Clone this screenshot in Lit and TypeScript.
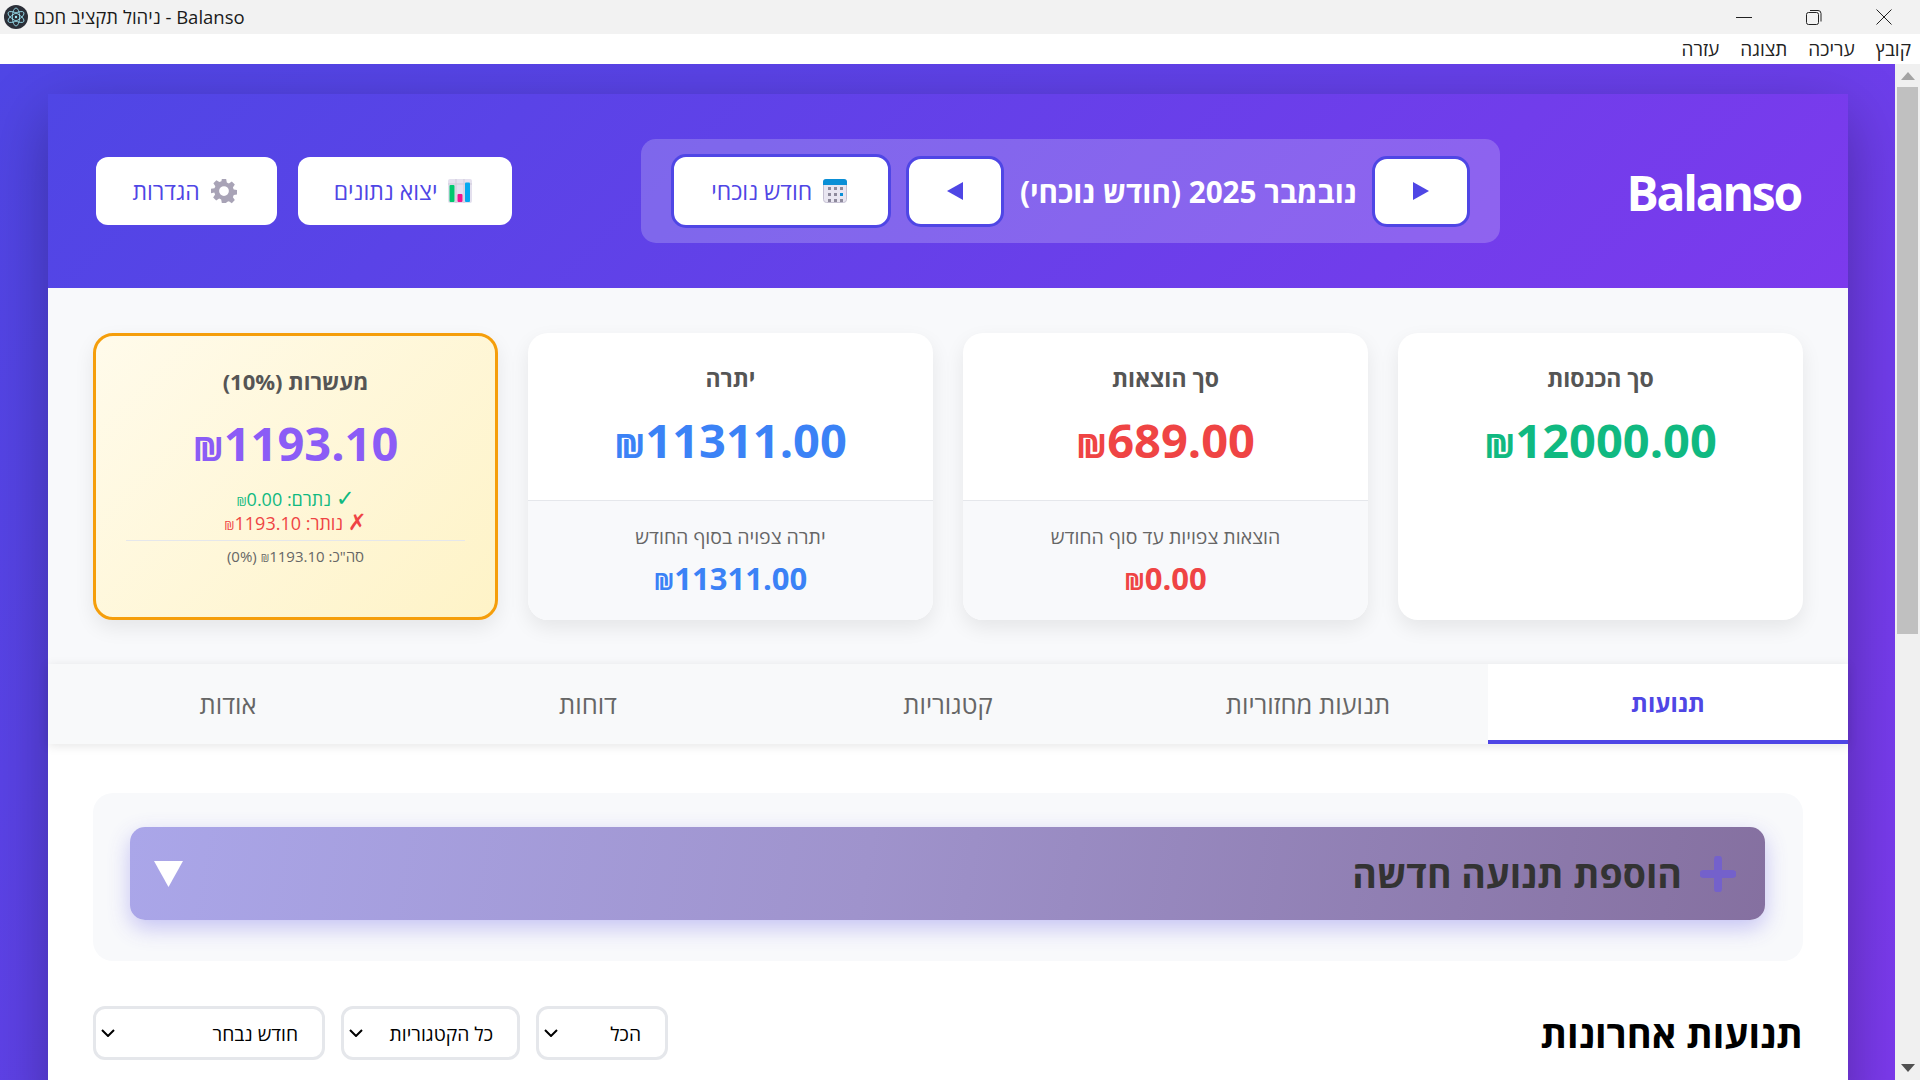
import { LitElement, html, css, svg } from 'lit';
import { customElement } from 'lit/decorators.js';

const gearIcon = html`<svg class="ico" viewBox="0 0 24 24" width="26" height="26">
  <path fill="#a8a3b6" fill-rule="evenodd" d="M10 1h4l.6 3.2 1.9.8 2.7-1.8 2.8 2.8-1.8 2.7.8 1.9 3.2.6v4l-3.2.6-.8 1.9 1.8 2.7-2.8 2.8-2.7-1.8-1.9.8L14 23h-4l-.6-3.2-1.9-.8-2.7 1.8-2.8-2.8 1.8-2.7-.8-1.9L0 14v-4l3.2-.6.8-1.9-1.8-2.7 2.8-2.8 2.7 1.8 1.9-.8zM12 7.5a4.5 4.5 0 1 0 0 9 4.5 4.5 0 0 0 0-9z"/>
</svg>`;

const chartIcon = html`<svg class="ico" viewBox="0 0 24 24" width="24" height="24">
  <rect x="0" y="0" width="24" height="24" rx="2" fill="#e4e0ee"/>
  <path d="M8 0v24M16 0v24M0 5h24" stroke="#cfcad9" stroke-width="1"/>
  <rect x="1.5" y="6" width="5" height="17" rx="1" fill="#00c86e"/>
  <rect x="9.5" y="15" width="5" height="8" rx="1" fill="#f2128e"/>
  <rect x="17" y="3.5" width="5" height="19.5" rx="1" fill="#03a9f0"/>
</svg>`;

const calendarIcon = html`<svg class="ico" viewBox="0 0 24 24" width="24" height="24">
  <rect x=".5" y=".5" width="23" height="23" rx="3" fill="#e9e6f1" stroke="#c5c0d2"/>
  <path d="M0 6V3a3 3 0 0 1 3-3h18a3 3 0 0 1 3 3v3z" fill="#0a8fd6"/>
  ${[5, 11, 17].map((y) =>
    [5, 11, 17].map(
      (x) => svg`<rect x=${x} y=${y + 3} width="3" height="3" fill=${x === 17 && y === 11 ? '#0a8fd6' : '#8e8a9c'}/>`
    )
  )}
</svg>`;

const electronIcon = html`<svg class="logo" viewBox="0 0 24 24" width="24" height="24">
  <circle cx="12" cy="12" r="12" fill="#2b2f38"/>
  <g fill="none" stroke="#9feaf9" stroke-width=".8">
    <ellipse cx="12" cy="12" rx="9" ry="3.6" transform="rotate(30 12 12)"/>
    <ellipse cx="12" cy="12" rx="9" ry="3.6" transform="rotate(90 12 12)"/>
    <ellipse cx="12" cy="12" rx="9" ry="3.6" transform="rotate(150 12 12)"/>
  </g>
  <circle cx="12" cy="12" r="1.2" fill="#9feaf9"/>
</svg>`;

const money = (v: string) => html`<span class="sym">₪</span>${v}`;

const summary = [
  { title: 'סך הכנסות', value: '12000.00', cls: 'green' },
  { title: 'סך הוצאות', value: '689.00', cls: 'red', foot: 'הוצאות צפויות עד סוף החודש', footValue: '0.00' },
  { title: 'יתרה', value: '11311.00', cls: 'blue', foot: 'יתרה צפויה בסוף החודש', footValue: '11311.00' },
];

const tabs = ['תנועות', 'תנועות מחזוריות', 'קטגוריות', 'דוחות', 'אודות'];
const menu = ['קובץ', 'עריכה', 'תצוגה', 'עזרה'];

@customElement('app-root')
export class AppRoot extends LitElement {
  static styles = css`
    :host {
      display: block;
      width: 1920px;
      height: 1080px;
      overflow: hidden;
      font-family: "Open Sans", "Noto Sans", "Liberation Sans", sans-serif;
      background: #fff;
    }
    * { box-sizing: border-box; }

    .titlebar {
      height: 34px;
      background: #f2f2f2;
      display: flex;
      align-items: center;
      padding-left: 2px;
      color: #1a1a1a;
      font-size: 18.5px;
    }
    .logo { margin-left: 2px; margin-right: 6px; }
    .title { flex: 1; padding-bottom: 2px; }
    .winbtns { display: flex; padding-right: 1px; }
    .winbtn { width: 70px; height: 34px; display: flex; align-items: center; justify-content: center; }
    .winbtn svg { display: block; }

    .menubar {
      height: 30px;
      direction: rtl;
      display: flex;
      gap: 21px;
      align-items: center;
      padding: 0 9px;
      background: #fff;
      font-size: 19px;
      color: #222;
    }

    .viewport { display: flex; height: 1016px; }
    .page {
      width: 1895px;
      height: 1016px;
      overflow: hidden;
      padding: 30px 47px 0 48px;
      background: linear-gradient(135deg, #4f46e5 0%, #7c3aed 100%);
      direction: rtl;
    }
    .scrollbar {
      width: 25px;
      background: #f0f0f0;
      display: flex;
      flex-direction: column;
      align-items: center;
      padding-top: 8px;
    }
    .thumb { width: 21px; height: 547px; background: #c0c0c0; margin-top: 7px; }
    .arrow-down { margin-top: auto; margin-bottom: 8px; }

    .container {
      width: 1800px;
      background: #fff;
      box-shadow: 0 20px 60px rgba(0, 0, 0, 0.3);
    }

    .header {
      height: 194px;
      display: flex;
      align-items: center;
      justify-content: space-between;
      padding: 0 45px;
      color: #fff;
      background: linear-gradient(135deg, #4f46e5 0%, #7c3aed 100%);
    }
    .brand { font-size: 48px; font-weight: 700; line-height: 1; letter-spacing: -2.2px; direction: ltr; padding: 4px 2px 0 0; }

    .nav {
      display: flex;
      align-items: center;
      gap: 15px;
      height: 104px;
      padding: 0 30px;
      border-radius: 15px;
      background: rgba(255, 255, 255, 0.2);
    }
    .nav-label { width: 338px; text-align: center; font-size: 29.7px; font-weight: 700; white-space: nowrap; }
    .btn {
      display: flex;
      align-items: center;
      justify-content: center;
      gap: 11px;
      height: 74px;
      border: 3px solid transparent;
      background-clip: padding-box;
      background-color: #fff;
      border-radius: 15px;
      color: #4f46e5;
      font-size: 23px;
      font-weight: 500;
      white-space: nowrap;
    }
    .btn.outlined { border-color: #4f46e5; background-clip: border-box; }
    .btn.arrow { width: 98px; height: 71px; }
    .btn.today { width: 220px; padding-right: 4px; }
    .actions { display: flex; gap: 15px; }
    .btn.export { width: 220px; padding-right: 4px; }
    .btn.settings { width: 187px; padding-right: 4px; }

    .stats {
      display: grid;
      grid-template-columns: repeat(4, 405px);
      gap: 30px;
      padding: 45px 45px 44px;
      background: #f8f9fb;
    }
    .card {
      height: 287px;
      display: flex;
      flex-direction: column;
      background: #fff;
      border-radius: 20px;
      overflow: hidden;
      box-shadow: 0 8px 20px rgba(0, 0, 0, 0.08);
      text-align: center;
    }
    .card-main { height: 167px; padding-top: 28px; }
    .card-title { font-size: 23px; font-weight: 700; color: #555; line-height: 34px; }
    .card-value { font-size: 47px; font-weight: 700; line-height: 64px; margin-top: 13px; }
    .sym { font-size: 0.72em; line-height: 0; }
    .mark { font-family: "DejaVu Sans", sans-serif; font-size: 1.25em; line-height: 0; }
    .card-foot {
      flex: 1;
      border-top: 1px solid #e5e7eb;
      background: #f8f9fb;
      padding-top: 21px;
    }
    .foot-label { font-size: 19.5px; color: #666; line-height: 30px; }
    .foot-value { font-size: 31px; font-weight: 700; line-height: 40px; margin-top: 6px; }
    .green { color: #10b981; }
    .red { color: #ef4444; }
    .blue { color: #3b82f6; }
    .purple { color: #8b5cf6; }

    .card.tithe {
      border: 3px solid #f59e0b;
      background: linear-gradient(135deg, #fffbeb 0%, #fef3c7 100%);
      padding: 28px 30px 0;
    }
    .tithe .card-title { font-size: 22px; }
    .tithe .card-value { margin-top: 13px; }
    .tithe-row { font-size: 18px; line-height: 24px; }
    .tithe-rows { margin-top: 12px; padding-bottom: 5px; border-bottom: 1px solid #e5e7eb; }
    .tithe-total { font-size: 15px; color: #666; line-height: 30px; }

    .tabs {
      display: grid;
      grid-template-columns: repeat(5, 360px);
      height: 80px;
      background: #f8f9fa;
      box-shadow: 0 2px 10px rgba(0, 0, 0, 0.1);
      position: relative;
    }
    .tab {
      display: flex;
      align-items: center;
      justify-content: center;
      font-size: 25.5px;
      color: #666;
      border-bottom: 4px solid transparent;
      padding-top: 4px;
    }
    .tab.active {
      background: #fff;
      color: #4f46e5;
      font-weight: 700;
      font-size: 24px;
      border-bottom-color: #4f46e5;
      padding-top: 0;
    }

    .content { padding: 49px 45px 60px; background: #fff; }
    .add-box {
      height: 168px;
      padding: 34px 38px 41px 37px;
      border-radius: 20px;
      background: #f8f9fb;
    }
    .add-btn {
      height: 93px;
      display: flex;
      align-items: center;
      justify-content: space-between;
      padding: 0 29px 0 24px;
      border-radius: 15px;
      background: linear-gradient(100deg, #aaa6e9 0%, #9f93cc 45%, #8570a0 100%);
      box-shadow: 0 8px 22px rgba(79, 70, 229, 0.3);
      color: #333;
    }
    .add-label { display: flex; align-items: center; gap: 18px; font-size: 37.5px; font-weight: 700; }
    .list-head {
      display: flex;
      align-items: center;
      justify-content: space-between;
      margin-top: 45px;
      height: 54px;
    }
    .list-title { margin: 0; font-size: 38px; font-weight: 700; color: #000; }
    .filters { display: flex; gap: 16px; }
    select {
      appearance: none;
      height: 54px;
      border: 3px solid #e5e7eb;
      border-radius: 12px;
      background: #fff no-repeat left 5px center;
      background-image: url("data:image/svg+xml,%3Csvg xmlns='http://www.w3.org/2000/svg' width='14' height='8'%3E%3Cpath d='M1 1l6 6 6-6' fill='none' stroke='%23000' stroke-width='2'/%3E%3C/svg%3E");
      padding: 0 24px 0 24px;
      color: #000;
      font-family: inherit;
      font-size: 19.3px;
    }
    .f-type { width: 132px; }
    .f-cat { width: 179px; }
    .f-month { width: 232px; }
  `;

  render() {
    return html`
      <div class="titlebar">
        ${electronIcon}
        <span class="title">ניהול תקציב חכם - Balanso</span>
        <div class="winbtns">
          <div class="winbtn"><svg width="16" height="16"><path d="M0 8.5h16" stroke="#222"/></svg></div>
          <div class="winbtn"><svg width="16" height="16" fill="none" stroke="#222"><rect x=".5" y="3.5" width="12" height="12" rx="2"/><path d="M4 1.5h8a3 3 0 0 1 3 3v8"/></svg></div>
          <div class="winbtn"><svg width="16" height="16"><path d="M.5.5l15 15M15.5.5l-15 15" stroke="#222"/></svg></div>
        </div>
      </div>
      <div class="menubar">${menu.map((m) => html`<span>${m}</span>`)}</div>
      <div class="viewport">
        <div class="page">
          <div class="container">
            ${this.renderHeader()}
            ${this.renderStats()}
            <div class="tabs">
              ${tabs.map((t, i) => html`<div class="tab ${i === 0 ? 'active' : ''}">${t}</div>`)}
            </div>
            <div class="content">
              <div class="add-box">
                <div class="add-btn">
                  <span class="add-label">
                    <svg width="36" height="36" viewBox="0 0 36 36"><path d="M18 3.5v29M3.5 18h29" stroke="#7461cb" stroke-width="8" stroke-linecap="round"/></svg>
                    הוספת תנועה חדשה
                  </span>
                  <svg width="30" height="26" viewBox="0 0 30 26"><path d="M0 0h29L14.5 26z" fill="#fff"/></svg>
                </div>
              </div>
              <div class="list-head">
                <h2 class="list-title">תנועות אחרונות</h2>
                <div class="filters">
                  <select class="f-type"><option>הכל</option></select>
                  <select class="f-cat"><option>כל הקטגוריות</option></select>
                  <select class="f-month"><option>חודש נבחר</option></select>
                </div>
              </div>
            </div>
          </div>
        </div>
        <div class="scrollbar">
          <svg width="14" height="8"><path d="M7 0l7 8H0z" fill="#a3a3a3"/></svg>
          <div class="thumb"></div>
          <svg class="arrow-down" width="14" height="8"><path d="M0 0h14L7 8z" fill="#505050"/></svg>
        </div>
      </div>
    `;
  }

  renderHeader() {
    return html`
      <header class="header">
        <div class="brand">Balanso</div>
        <div class="nav">
          <div class="btn outlined arrow"><svg width="16" height="18"><path d="M0 0l16 9-16 9z" fill="#4f46e5"/></svg></div>
          <div class="nav-label">נובמבר 2025 (חודש נוכחי)</div>
          <div class="btn outlined arrow"><svg width="16" height="18"><path d="M16 0L0 9l16 9z" fill="#4f46e5"/></svg></div>
          <div class="btn outlined today">${calendarIcon}<span>חודש נוכחי</span></div>
        </div>
        <div class="actions">
          <div class="btn export">${chartIcon}<span>יצוא נתונים</span></div>
          <div class="btn settings">${gearIcon}<span>הגדרות</span></div>
        </div>
      </header>
    `;
  }

  renderStats() {
    return html`
      <section class="stats">
        ${summary.map(
          (c) => html`
            <div class="card">
              <div class="card-main">
                <div class="card-title">${c.title}</div>
                <div class="card-value ${c.cls}">${money(c.value)}</div>
              </div>
              ${c.foot
                ? html`<div class="card-foot">
                    <div class="foot-label">${c.foot}</div>
                    <div class="foot-value ${c.cls}">${money(c.footValue!)}</div>
                  </div>`
                : ''}
            </div>
          `
        )}
        <div class="card tithe">
          <div class="card-title">מעשרות (10%)</div>
          <div class="card-value purple">${money('1193.10')}</div>
          <div class="tithe-rows">
            <div class="tithe-row green"><span class="mark">✓</span> נתרם: ${money('0.00')}</div>
            <div class="tithe-row red"><span class="mark">✗</span> נותר: ${money('1193.10')}</div>
          </div>
          <div class="tithe-total">סה"כ: ${money('1193.10')} (0%)</div>
        </div>
      </section>
    `;
  }
}
